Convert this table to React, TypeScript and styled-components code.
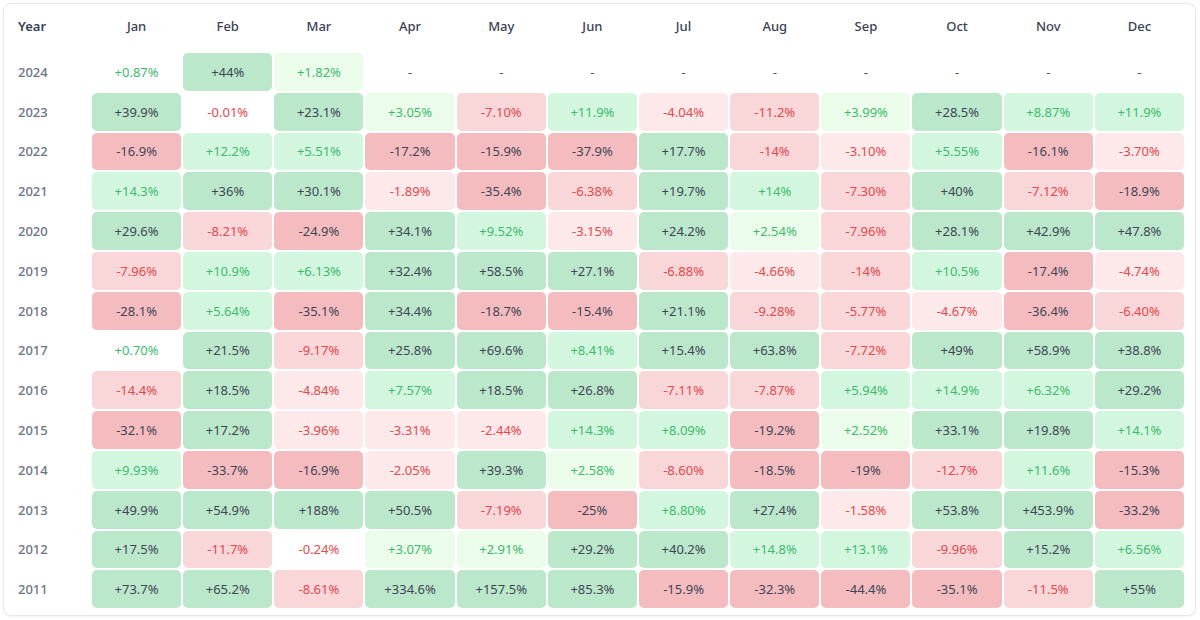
import styled, { createGlobalStyle } from 'styled-components';

const MONTHS = ['Jan', 'Feb', 'Mar', 'Apr', 'May', 'Jun', 'Jul', 'Aug', 'Sep', 'Oct', 'Nov', 'Dec'];

type Row = { year: number; values: (string | null)[] };

const ROWS: Row[] = [
  { year: 2024, values: ['+0.87%', '+44%', '+1.82%', null, null, null, null, null, null, null, null, null] },
  { year: 2023, values: ['+39.9%', '-0.01%', '+23.1%', '+3.05%', '-7.10%', '+11.9%', '-4.04%', '-11.2%', '+3.99%', '+28.5%', '+8.87%', '+11.9%'] },
  { year: 2022, values: ['-16.9%', '+12.2%', '+5.51%', '-17.2%', '-15.9%', '-37.9%', '+17.7%', '-14%', '-3.10%', '+5.55%', '-16.1%', '-3.70%'] },
  { year: 2021, values: ['+14.3%', '+36%', '+30.1%', '-1.89%', '-35.4%', '-6.38%', '+19.7%', '+14%', '-7.30%', '+40%', '-7.12%', '-18.9%'] },
  { year: 2020, values: ['+29.6%', '-8.21%', '-24.9%', '+34.1%', '+9.52%', '-3.15%', '+24.2%', '+2.54%', '-7.96%', '+28.1%', '+42.9%', '+47.8%'] },
  { year: 2019, values: ['-7.96%', '+10.9%', '+6.13%', '+32.4%', '+58.5%', '+27.1%', '-6.88%', '-4.66%', '-14%', '+10.5%', '-17.4%', '-4.74%'] },
  { year: 2018, values: ['-28.1%', '+5.64%', '-35.1%', '+34.4%', '-18.7%', '-15.4%', '+21.1%', '-9.28%', '-5.77%', '-4.67%', '-36.4%', '-6.40%'] },
  { year: 2017, values: ['+0.70%', '+21.5%', '-9.17%', '+25.8%', '+69.6%', '+8.41%', '+15.4%', '+63.8%', '-7.72%', '+49%', '+58.9%', '+38.8%'] },
  { year: 2016, values: ['-14.4%', '+18.5%', '-4.84%', '+7.57%', '+18.5%', '+26.8%', '-7.11%', '-7.87%', '+5.94%', '+14.9%', '+6.32%', '+29.2%'] },
  { year: 2015, values: ['-32.1%', '+17.2%', '-3.96%', '-3.31%', '-2.44%', '+14.3%', '+8.09%', '-19.2%', '+2.52%', '+33.1%', '+19.8%', '+14.1%'] },
  { year: 2014, values: ['+9.93%', '-33.7%', '-16.9%', '-2.05%', '+39.3%', '+2.58%', '-8.60%', '-18.5%', '-19%', '-12.7%', '+11.6%', '-15.3%'] },
  { year: 2013, values: ['+49.9%', '+54.9%', '+188%', '+50.5%', '-7.19%', '-25%', '+8.80%', '+27.4%', '-1.58%', '+53.8%', '+453.9%', '-33.2%'] },
  { year: 2012, values: ['+17.5%', '-11.7%', '-0.24%', '+3.07%', '+2.91%', '+29.2%', '+40.2%', '+14.8%', '+13.1%', '-9.96%', '+15.2%', '+6.56%'] },
  { year: 2011, values: ['+73.7%', '+65.2%', '-8.61%', '+334.6%', '+157.5%', '+85.3%', '-15.9%', '-32.3%', '-44.4%', '-35.1%', '-11.5%', '+55%'] },
];

type Tone = 'g3' | 'g2' | 'g1' | 'r3' | 'r2' | 'r1' | 'up' | 'down';

// strength of colour goes by the size of the move
const toneOf = (v: string): Tone => {
  const n = parseFloat(v);
  const a = Math.abs(n);
  const up = n >= 0;
  if (a < 1) return up ? 'up' : 'down';
  if (a < 5) return up ? 'g1' : 'r1';
  if (a < 15) return up ? 'g2' : 'r2';
  return up ? 'g3' : 'r3';
};

const BG: Record<Tone, string> = {
  g3: '#bbe8cb',
  g2: '#d3f6df',
  g1: '#ebfdea',
  r3: '#f4bcbf',
  r2: '#f9d6d8',
  r1: '#fde9e9',
  up: 'transparent',
  down: 'transparent',
};

const GREEN = '#3dbb6d';
const RED = '#e5484d';
const DARK = '#3e4556';

const FG: Record<Tone, string> = {
  g3: DARK,
  g2: GREEN,
  g1: GREEN,
  r3: DARK,
  r2: RED,
  r1: RED,
  up: GREEN,
  down: RED,
};

const GlobalStyle = createGlobalStyle`
  body {
    margin: 0;
    background: #ffffff;
    font-family: "Noto Sans", "Open Sans", sans-serif;
  }
`;

const Page = styled.div`
  padding: 3px 4px 5px 3px;
`;

const Card = styled.div`
  background: #ffffff;
  border: 1px solid #e6e8eb;
  border-radius: 8px;
  box-shadow: 0 1px 3px rgba(15, 23, 42, 0.05);
  padding: 3px 11px 7px 14px;
`;

const Grid = styled.div`
  display: grid;
  grid-template-columns: 72px repeat(12, 1fr);
  column-gap: 2px;
  row-gap: 2px;
  grid-auto-rows: 37.8px;
`;

const HeadRow = styled(Grid)`
  grid-auto-rows: 38px;
  margin-bottom: 8px;
`;

const HeadCell = styled.div<{ $first?: boolean }>`
  display: flex;
  align-items: center;
  justify-content: ${p => (p.$first ? 'flex-start' : 'center')};
  font-size: 13px;
  font-weight: ${p => (p.$first ? 600 : 500)};
  color: #3a4254;
`;

const YearCell = styled.div`
  display: flex;
  align-items: center;
  font-size: 13px;
  font-weight: 500;
  color: #6b7385;
`;

const Cell = styled.div<{ $tone: Tone }>`
  display: flex;
  align-items: center;
  justify-content: center;
  border-radius: 5px;
  font-size: 13px;
  background: ${p => BG[p.$tone]};
  color: ${p => FG[p.$tone]};
`;

const Empty = styled.div`
  display: flex;
  align-items: center;
  justify-content: center;
  font-size: 13px;
  color: #4b5263;
`;

function App() {
  return (
    <Page>
      <GlobalStyle />
      <Card>
        <HeadRow>
          <HeadCell $first>Year</HeadCell>
          {MONTHS.map(m => (
            <HeadCell key={m}>{m}</HeadCell>
          ))}
        </HeadRow>
        <Grid>
          {ROWS.map(r => [
            <YearCell key={r.year}>{r.year}</YearCell>,
            ...r.values.map((v, i) =>
              v === null ? (
                <Empty key={`${r.year}-${i}`}>-</Empty>
              ) : (
                <Cell key={`${r.year}-${i}`} $tone={toneOf(v)}>{v}</Cell>
              )
            ),
          ])}
        </Grid>
      </Card>
    </Page>
  );
}

export default App;
